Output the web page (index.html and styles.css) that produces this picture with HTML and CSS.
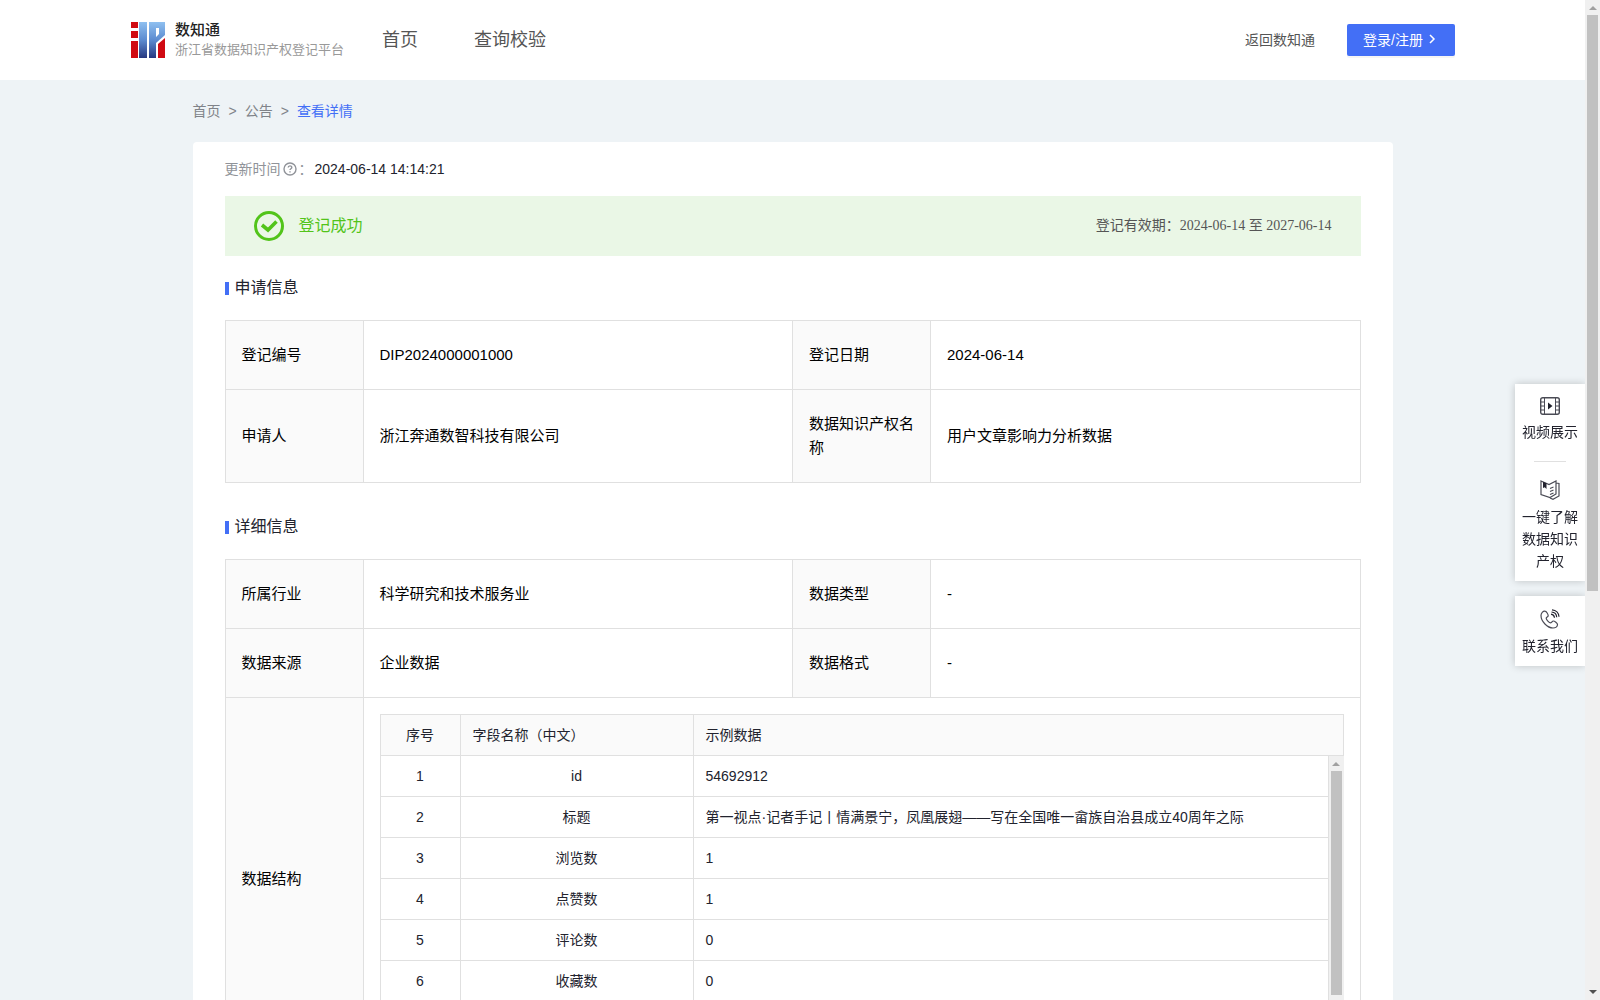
FILE: index.html
```html
<!DOCTYPE html>
<html lang="zh-CN">
<head>
    <meta charset="UTF-8">
    <meta name="viewport" content="width=device-width, initial-scale=1.0">
    <title>浙江省数据知识产权登记平台</title>
    <link rel="stylesheet" href="styles.css">
</head>
<body>
    <div class="page">
        <header class="header">
            <a class="logo" href="#">
                <svg width="34" height="36" viewBox="0 0 34 36" aria-hidden="true">
                    <defs>
                        <linearGradient id="blue" x1="0" y1="0" x2="0" y2="1">
                            <stop offset="0" stop-color="#8fc0f0"/>
                            <stop offset="0.5" stop-color="#5c8bd0"/>
                            <stop offset="1" stop-color="#273880"/>
                        </linearGradient>
                    </defs>
                    <path fill="#d00a12" d="M0 0h7v6H0zM0 9h7v7H0zM0 19h7v17H0z"/>
                    <path fill="url(#blue)" d="M8 0h8v36H8zM18 0h16v13l-9 8v15h-7zM25 6v9l3-3V6z" fill-rule="evenodd"/>
                    <path fill="#d00a12" d="M34 16v20h-7V22z"/>
                </svg>
                <span class="logo-text">
                    <span class="logo-name">数知通</span>
                    <span class="logo-sub">浙江省数据知识产权登记平台</span>
                </span>
            </a>
            <nav class="nav">
                <a href="#">首页</a>
                <a href="#">查询校验</a>
            </nav>
            <a class="back-link" href="#">返回数知通</a>
            <button class="login-btn" type="button">登录/注册
                <svg width="10" height="12" viewBox="0 0 10 12" aria-hidden="true"><path d="M3 2l4 4-4 4" fill="none" stroke="#fff" stroke-width="1.5"/></svg>
            </button>
        </header>

        <main class="main">
            <nav class="breadcrumb">
                <a href="#">首页</a>
                <span>&gt;</span>
                <a href="#">公告</a>
                <span>&gt;</span>
                <a class="current" href="#">查看详情</a>
            </nav>

            <div class="card">
                <div class="update">
                    <span>更新时间</span>
                    <svg width="14" height="14" viewBox="0 0 14 14" fill="none" stroke="#909399" aria-hidden="true">
                        <circle cx="7" cy="7" r="6" stroke-width="1.4"/>
                        <path d="M5.2 5.6c0-2.3 3.6-2.3 3.6-.1 0 1.300-1.800 1.300-1.800 2.600M7 9.300v1.100" stroke-width="1.400"/>
                    </svg>
                    <span>：</span>
                    <span class="update-time">2024-06-14 14:14:21</span>
                </div>

                <div class="banner">
                    <svg width="30" height="30" viewBox="0 0 30 30" fill="none" stroke="#52c41a" aria-hidden="true">
                        <circle cx="15" cy="15" r="13.5" stroke-width="3"/>
                        <path d="M8 14l6 5 8.500-8.500" stroke-width="3.600"/>
                    </svg>
                    <span class="banner-status">登记成功</span>
                    <span class="banner-date">登记有效期：2024-06-14 至 2027-06-14</span>
                </div>

                <h2 class="title">申请信息</h2>
                <table class="info">
                    <tr>
                        <th>登记编号</th>
                        <td>DIP2024000001000</td>
                        <th>登记日期</th>
                        <td>2024-06-14</td>
                    </tr>
                    <tr>
                        <th>申请人</th>
                        <td>浙江奔通数智科技有限公司</td>
                        <th>数据知识产权名称</th>
                        <td>用户文章影响力分析数据</td>
                    </tr>
                </table>

                <h2 class="title">详细信息</h2>
                <table class="info">
                    <tr>
                        <th>所属行业</th>
                        <td>科学研究和技术服务业</td>
                        <th>数据类型</th>
                        <td>-</td>
                    </tr>
                    <tr>
                        <th>数据来源</th>
                        <td>企业数据</td>
                        <th>数据格式</th>
                        <td>-</td>
                    </tr>
                    <tr>
                        <th>数据结构</th>
                        <td class="fields-cell" colspan="3">
                            <table class="fields">
                                <tr>
                                    <th class="num">序号</th>
                                    <th class="name">字段名称（中文）</th>
                                    <th>示例数据</th>
                                </tr>
                            </table>
                            <div class="fields-body">
                                <table class="fields">
                                    <tr><td class="num">1</td><td class="name">id</td><td>54692912</td></tr>
                                    <tr><td class="num">2</td><td class="name">标题</td><td>第一视点·记者手记丨情满景宁，凤凰展翅——写在全国唯一畲族自治县成立40周年之际</td></tr>
                                    <tr><td class="num">3</td><td class="name">浏览数</td><td>1</td></tr>
                                    <tr><td class="num">4</td><td class="name">点赞数</td><td>1</td></tr>
                                    <tr><td class="num">5</td><td class="name">评论数</td><td>0</td></tr>
                                    <tr><td class="num">6</td><td class="name">收藏数</td><td>0</td></tr>
                                </table>
                                <div class="scrollbar" aria-hidden="true">
                                    <span class="arrow-up"></span>
                                    <span class="thumb"></span>
                                    <span class="arrow-down"></span>
                                </div>
                            </div>
                        </td>
                    </tr>
                </table>
            </div>
        </main>
    </div>

    <aside class="side">
        <div class="side-box">
            <a href="#">
                <svg width="20" height="18" viewBox="0 0 20 18" fill="none" stroke="#4a4b55" aria-hidden="true">
                    <rect x="0.700" y="0.700" width="18.600" height="16.600" rx="2" stroke-width="1.400"/>
                    <path d="M4.500 1v16M15.500 1v16M1 5h3.500M1 9h3.500M1 13h3.500M15.500 5H19M15.500 9H19M15.500 13H19"/>
                    <path d="M8 5.500v7L12.500 9z" fill="#22232e" stroke="none"/>
                </svg>
                视频展示
            </a>
            <hr>
            <a href="#">
                <svg width="20" height="20" viewBox="0 0 20 20" fill="none" stroke="#4a4b55" stroke-width="1.200" aria-hidden="true">
                    <path d="M1 1l8 3.500L16 1v13l-6 3.500L1 14.500zM16 3l3 .5v12.500L13 19.300l-3-1.300M10 8.500l3.500-1.500M10 11.500l3.500-1.500M10 14.500l3.500-1.500"/>
                    <path d="M3 1.800l3.500 1.500V9L4.700 7.300 3 8z" fill="#22232e" stroke="none"/>
                </svg>
                一键了解数据知识产权
            </a>
        </div>
        <div class="side-box">
            <a href="#">
                <svg width="20" height="20" viewBox="0 0 20 20" fill="none" stroke="#4a4b55" stroke-width="1.200" aria-hidden="true">
                    <path d="M5 2.200C3 2 1 4 1 6.500c0 6 6.500 12.500 12 12.500 2.500 0 4.500-1.500 4.500-3.500 0-1.200-3-3.500-4.200-3.500-1.300 0-1.300 1.800-2.600 1.800-1.600 0-4.500-3-4.500-4.600 0-1.200 2-1.200 2-2.500C8.200 5.500 6.500 2.300 5 2.200z"/>
                    <path d="M11 5.200c2 .3 3.300 1.600 3.500 3.600M11.500 3c3 .2 5 2.200 5.200 5.200M12 .8c4 .2 6.800 3 7 7" stroke="#22232e"/>
                </svg>
                联系我们
            </a>
        </div>
    </aside>

    <div class="scrollbar page-scrollbar" aria-hidden="true">
        <span class="arrow-up"></span>
        <span class="thumb"></span>
        <span class="arrow-down"></span>
    </div>
</body>
</html>
```
FILE: styles.css
```css
* {
    box-sizing: border-box;
}
body {
    display: flex;
    height: 100vh;
    margin: 0;
    overflow: hidden;
    background-color: #eef3f6;
    color: #22232e;
    font-family: "Liberation Sans", "Noto Sans CJK SC", sans-serif;
    font-size: 14px;
    line-height: 22px;
}
a {
    color: inherit;
    text-decoration: none;
}
svg {
    flex: none;
}
.page {
    flex: 1;
    height: 100vh;
    overflow-y: auto;
    scrollbar-width: none;
}

/* header */
.header {
    display: flex;
    align-items: center;
    height: 80px;
    padding: 0 130px 0 131px;
    background-color: #fff;
    color: #555;
}
.logo {
    display: flex;
    align-items: center;
    gap: 10px;
}
.logo-text {
    display: flex;
    flex-direction: column;
    line-height: 20px;
}
.logo-name {
    color: #222;
    font-size: 15px;
    font-weight: 500;
}
.logo-sub {
    color: #999;
    font-size: 13px;
}
.nav {
    display: flex;
    flex: 1;
    gap: 56px;
    padding-left: 38px;
    font-size: 18px;
}
.login-btn {
    display: flex;
    align-items: center;
    gap: 4px;
    width: 108px;
    height: 32px;
    margin-left: 32px;
    padding: 0 16px 2px;
    border: none;
    border-radius: 2px;
    background-color: #436ff6;
    box-shadow: 0 2px 0 rgba(0, 0, 0, 0.04);
    color: #fff;
    font-family: inherit;
    font-size: 14px;
    white-space: nowrap;
    cursor: pointer;
}

/* content */
.main {
    max-width: 1200px;
    margin: 0 auto;
}
.breadcrumb {
    display: flex;
    gap: 8px;
    padding: 20px 0;
    color: #808389;
}
.breadcrumb .current {
    color: #436ff6;
}
.card {
    padding: 16px 32px 32px;
    border-radius: 4px;
    background-color: #fff;
}
.update {
    display: flex;
    align-items: center;
    gap: 2px;
    color: #909399;
}
.update-time {
    color: #22232e;
}
.banner {
    display: flex;
    align-items: center;
    height: 60px;
    margin-top: 16px;
    padding: 0 29px;
    background-color: #eaf7e6;
}
.banner-status {
    flex: 1;
    margin-left: 15px;
    color: #52c41a;
    font-size: 16px;
}
.banner-date {
    color: #555;
    font-family: "Liberation Serif", "Noto Sans CJK SC", serif;
}
.title {
    display: flex;
    align-items: center;
    gap: 6px;
    margin: 20px 0;
    font-size: 16px;
    font-weight: 400;
    line-height: 24px;
}
.title::before {
    content: "";
    width: 4px;
    height: 13px;
    background-color: #436ff6;
}

/* info tables */
.info {
    width: 100%;
    margin-bottom: 32px;
    border-collapse: collapse;
    table-layout: fixed;
    color: #000;
    font-size: 15px;
    line-height: 24px;
}
.info th, .info td {
    height: 69px;
    padding: 22px 16px;
    border: 1px solid #e0e0e0;
    font-weight: 400;
    text-align: left;
}
.info th {
    width: 138px;
    background-color: #fafafa;
}
.info .fields-cell {
    padding: 16px;
}
.info .fields {
    width: 100%;
    border-collapse: collapse;
    table-layout: fixed;
    color: #22232e;
    font-size: 14px;
    line-height: 20px;
}
.info .fields th, .info .fields td {
    width: auto;
    height: 41px;
    padding: 10px 12px;
}
.info .fields .num {
    width: 80px;
    text-align: center;
}
.info .fields .name {
    width: 233px;
}
.info .fields td.name {
    text-align: center;
}
.fields-body {
    display: flex;
    align-items: flex-start;
    height: 288px;
}
.fields-body .fields {
    flex: 1;
    margin-top: -1px;
}

/* scrollbars */
.scrollbar {
    display: flex;
    flex: none;
    flex-direction: column;
    align-items: center;
    width: 15px;
    height: 100%;
    background-color: #f0f0f0;
}
.scrollbar .thumb {
    width: 11px;
    height: 224px;
    margin: 5px 0 auto;
    background-color: #c1c1c1;
}
.arrow-up, .arrow-down {
    border: 4px solid transparent;
}
.arrow-up {
    margin-top: 2px;
    border-bottom-color: #a0a0a0;
}
.arrow-down {
    margin-bottom: 2px;
    border-top-color: #505050;
}
.page-scrollbar .thumb {
    height: 576px;
}

/* floating menu */
.side {
    position: fixed;
    top: 384px;
    right: 15px;
    display: flex;
    flex-direction: column;
    gap: 15px;
    width: 70px;
}
.side-box {
    padding: 13px 7px 9px;
    background-color: #fff;
    box-shadow: 0 0 8px rgba(0, 0, 0, 0.2);
    clip-path: inset(-10px 0 -10px -10px);
}
.side-box a {
    display: flex;
    flex-direction: column;
    align-items: center;
    gap: 6px;
    text-align: center;
}
.side-box hr {
    width: 32px;
    margin: 18px auto;
    border: none;
    border-top: 1px solid #e0e0e0;
}
```
